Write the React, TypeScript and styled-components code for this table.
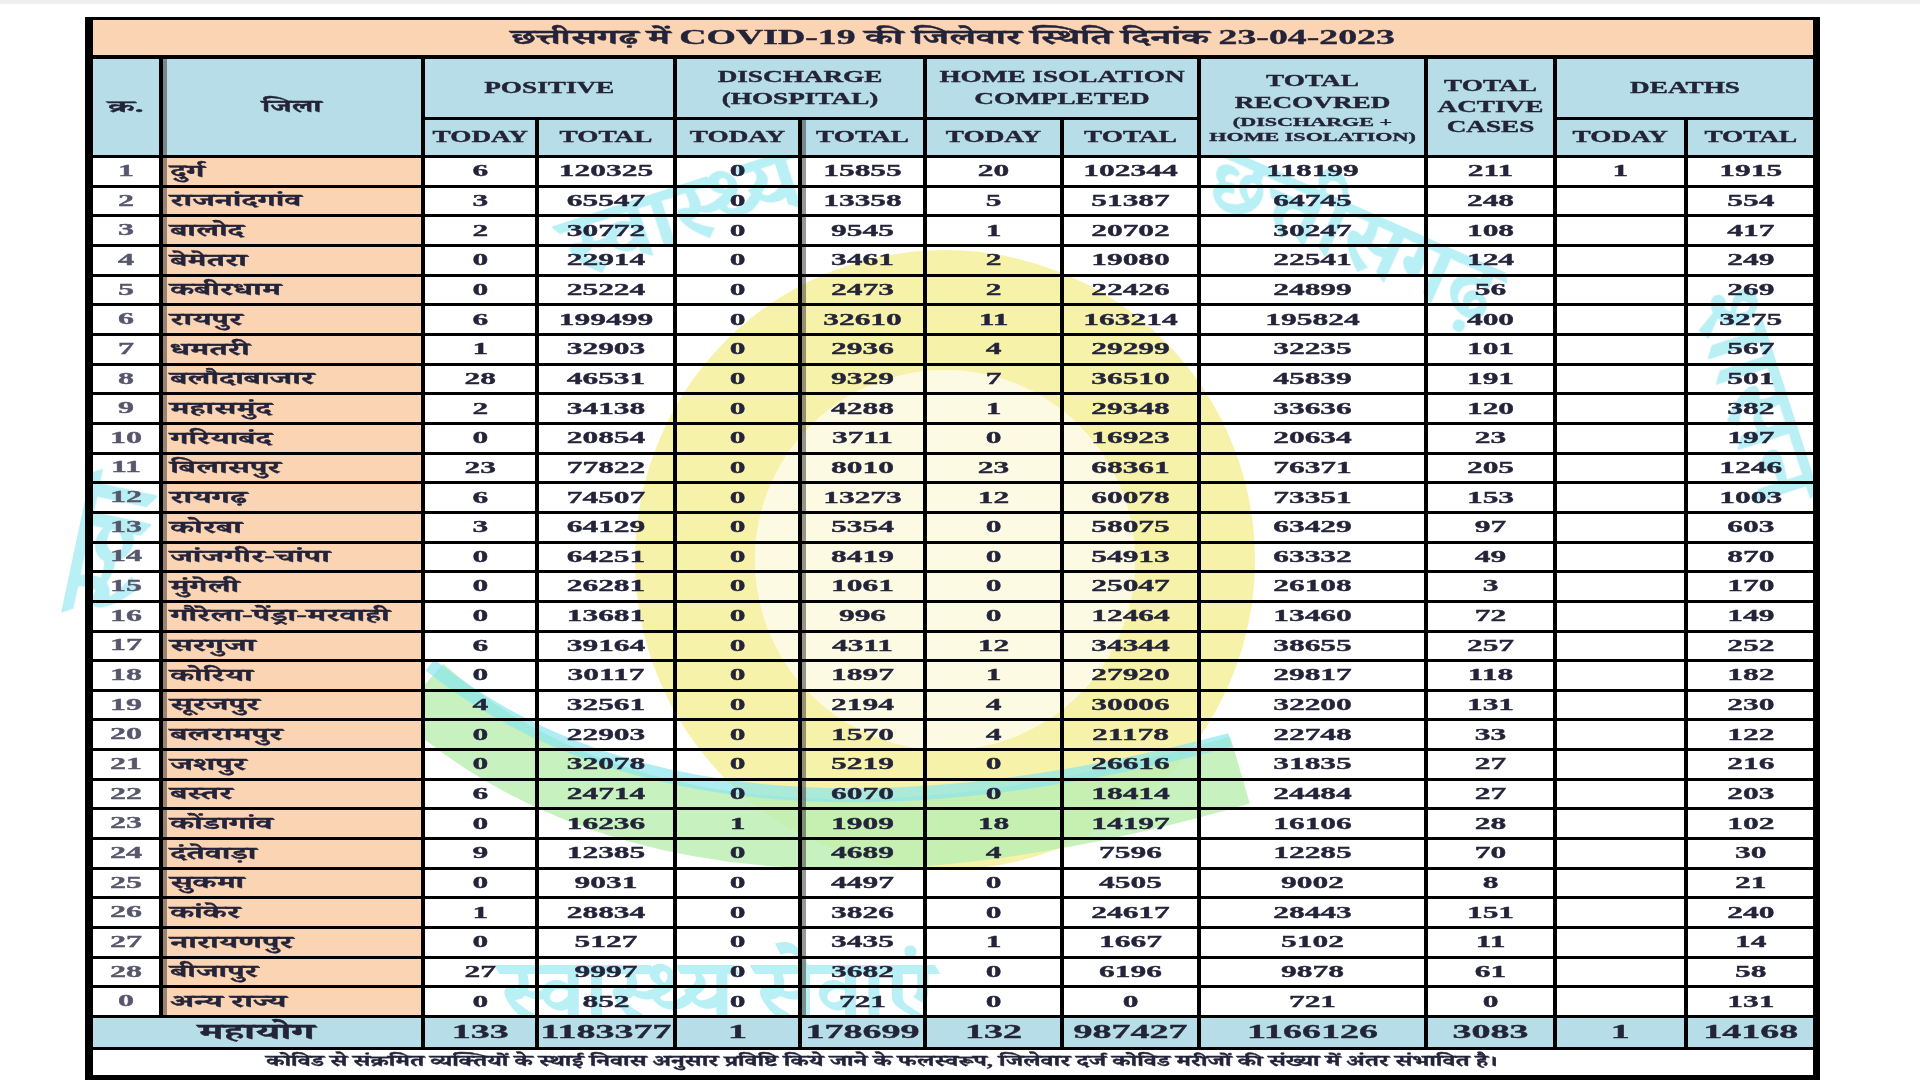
import React from "react";
import styled, { createGlobalStyle } from "styled-components";

const GlobalStyle = createGlobalStyle`
  body {
    margin: 0;
    background: #ffffff;
  }
`;

const SERIF = `"Liberation Serif", "Noto Serif Devanagari", "Noto Sans Devanagari", "Lohit Devanagari", "FreeSerif", serif`;
const INK = "#23233a";
const PEACH = "#fbd4b4";
const BLUE = "#b7dde8";

type Row = [number, string, number, number, number, number, number, number, number, number, number | null, number];

const rows: Row[] = [
  [1, "दुर्ग", 6, 120325, 0, 15855, 20, 102344, 118199, 211, 1, 1915],
  [2, "राजनांदगांव", 3, 65547, 0, 13358, 5, 51387, 64745, 248, null, 554],
  [3, "बालोद", 2, 30772, 0, 9545, 1, 20702, 30247, 108, null, 417],
  [4, "बेमेतरा", 0, 22914, 0, 3461, 2, 19080, 22541, 124, null, 249],
  [5, "कबीरधाम", 0, 25224, 0, 2473, 2, 22426, 24899, 56, null, 269],
  [6, "रायपुर", 6, 199499, 0, 32610, 11, 163214, 195824, 400, null, 3275],
  [7, "धमतरी", 1, 32903, 0, 2936, 4, 29299, 32235, 101, null, 567],
  [8, "बलौदाबाजार", 28, 46531, 0, 9329, 7, 36510, 45839, 191, null, 501],
  [9, "महासमुंद", 2, 34138, 0, 4288, 1, 29348, 33636, 120, null, 382],
  [10, "गरियाबंद", 0, 20854, 0, 3711, 0, 16923, 20634, 23, null, 197],
  [11, "बिलासपुर", 23, 77822, 0, 8010, 23, 68361, 76371, 205, null, 1246],
  [12, "रायगढ़", 6, 74507, 0, 13273, 12, 60078, 73351, 153, null, 1003],
  [13, "कोरबा", 3, 64129, 0, 5354, 0, 58075, 63429, 97, null, 603],
  [14, "जांजगीर-चांपा", 0, 64251, 0, 8419, 0, 54913, 63332, 49, null, 870],
  [15, "मुंगेली", 0, 26281, 0, 1061, 0, 25047, 26108, 3, null, 170],
  [16, "गौरेला-पेंड्रा-मरवाही", 0, 13681, 0, 996, 0, 12464, 13460, 72, null, 149],
  [17, "सरगुजा", 6, 39164, 0, 4311, 12, 34344, 38655, 257, null, 252],
  [18, "कोरिया", 0, 30117, 0, 1897, 1, 27920, 29817, 118, null, 182],
  [19, "सूरजपुर", 4, 32561, 0, 2194, 4, 30006, 32200, 131, null, 230],
  [20, "बलरामपुर", 0, 22903, 0, 1570, 4, 21178, 22748, 33, null, 122],
  [21, "जशपुर", 0, 32078, 0, 5219, 0, 26616, 31835, 27, null, 216],
  [22, "बस्तर", 6, 24714, 0, 6070, 0, 18414, 24484, 27, null, 203],
  [23, "कोंडागांव", 0, 16236, 1, 1909, 18, 14197, 16106, 28, null, 102],
  [24, "दंतेवाड़ा", 9, 12385, 0, 4689, 4, 7596, 12285, 70, null, 30],
  [25, "सुकमा", 0, 9031, 0, 4497, 0, 4505, 9002, 8, null, 21],
  [26, "कांकेर", 1, 28834, 0, 3826, 0, 24617, 28443, 151, null, 240],
  [27, "नारायणपुर", 0, 5127, 0, 3435, 1, 1667, 5102, 11, null, 14],
  [28, "बीजापुर", 27, 9997, 0, 3682, 0, 6196, 9878, 61, null, 58],
  [0, "अन्य राज्य", 0, 852, 0, 721, 0, 0, 721, 0, null, 131],
];

const totals = [133, 1183377, 1, 178699, 132, 987427, 1166126, 3083, 1, 14168];

const colWidths = [68, 261.5, 114.5, 138, 125, 125, 137, 137, 227, 129, 130.5, 127.5];
// columns that carry the grey shadow strip on their left edge
const shaded = new Set([1, 5]);

const Page = styled.div`
  position: relative;
  width: 1920px;
  height: 1080px;
  overflow: hidden;
  background: #ffffff;
`;

const TopStrip = styled.div`
  height: 4px;
  background: #efefef;
  margin-bottom: 13px;
`;

const Watermark = styled.svg`
  position: absolute;
  top: 0;
  left: 0;
  z-index: 0;
`;

const Frame = styled.div`
  position: relative;
  z-index: 1;
  margin-left: 85px;
  width: 1720px;
  border-style: solid;
  border-color: #000;
  border-width: 3px 7px 7px 8px;
`;

const Table = styled.table`
  width: 1720px;
  table-layout: fixed;
  border-collapse: collapse;
  border-style: hidden;
  font-family: ${SERIF};
  font-weight: bold;
  color: ${INK};
`;

const Tr = styled.tr<{ $h: number }>`
  height: ${({ $h }) => $h}px;
`;

const Cell = styled.td<{ $bg?: string; $shade?: boolean; $left?: boolean }>`
  padding: 0;
  border-style: solid;
  border-color: #000;
  border-width: 3px 4px;
  background: ${({ $bg }) => $bg || "transparent"};
  text-align: ${({ $left }) => ($left ? "left" : "center")};
  vertical-align: middle;
  white-space: nowrap;
  overflow: hidden;
  box-shadow: ${({ $shade }) => ($shade ? "inset 4px 0 0 rgba(70, 66, 62, 0.55)" : "none")};
`;

const TitleCell = styled(Cell)`
  border-bottom-width: 4px;
`;

const Text = styled.span<{ $size: number; $sx: number; $left?: boolean; $color?: string }>`
  display: block;
  font-size: ${({ $size }) => $size}px;
  line-height: 1.3;
  color: ${({ $color }) => $color || INK};
  -webkit-text-stroke: 0.35px ${({ $color }) => $color || INK};
  transform: scaleX(${({ $sx }) => $sx});
  transform-origin: ${({ $left }) => ($left ? "left center" : "center")};
  padding-left: ${({ $left }) => ($left ? "4px" : "0")};
`;

const HeadText = styled(Text)`
  line-height: 22px;
`;

const SmallHeadText = styled(Text)`
  line-height: 15px;
`;

const FooterText = styled(Text)`
  padding-left: 105px;
`;

const fmt = (v: number | null) => (v === null ? "" : String(v));

function WatermarkArt() {
  const cyan = "#8ae6ee";
  return (
    <Watermark width="1920" height="1080" viewBox="0 0 1920 1080">
      <circle cx="945" cy="560" r="250" fill="none" stroke="#f6f09a" strokeWidth="120" opacity="0.85" />
      <circle cx="945" cy="560" r="190" fill="#fbf8d6" opacity="0.7" />
      <path d="M420 690 Q 690 930 1240 770" fill="none" stroke="#bdeeb4" strokeWidth="70" opacity="0.85" />
      <path d="M430 665 Q 700 880 1230 740" fill="none" stroke={cyan} strokeWidth="14" opacity="0.7" />
      <g fill={cyan} fontFamily={SERIF} fontWeight="bold" opacity="0.6">
        <text x="575" y="280" fontSize="92" transform="rotate(-18 575 280)">स्वास्थ्य</text>
        <text x="1200" y="200" fontSize="92" transform="rotate(24 1200 200)">छत्तीसगढ़</text>
        <text x="1690" y="300" fontSize="100" transform="rotate(72 1690 300)">शासन</text>
        <text x="130" y="620" fontSize="110" transform="rotate(-78 130 620)">स्वा</text>
        <text x="500" y="1020" fontSize="88">स्वास्थ्य सेवाएं</text>
      </g>
    </Watermark>
  );
}

export default function App() {
  return (
    <Page>
      <GlobalStyle />
      <WatermarkArt />
      <TopStrip />
      <Frame>
        <Table>
          <colgroup>
            {colWidths.map((w, i) => (
              <col key={i} style={{ width: w }} />
            ))}
          </colgroup>
          <tbody>
            <Tr $h={37}>
              <TitleCell colSpan={12} $bg={PEACH}>
                <Text $size={21} $sx={1.8}>
                  छत्तीसगढ़ में COVID-19 की जिलेवार स्थिति दिनांक 23-04-2023
                </Text>
              </TitleCell>
            </Tr>
            <Tr $h={61.5}>
              <Cell as="th" rowSpan={2} $bg={BLUE}>
                <Text $size={17} $sx={2.1}>क्र.</Text>
              </Cell>
              <Cell as="th" rowSpan={2} $bg={BLUE} $shade>
                <Text $size={18} $sx={1.7}>जिला</Text>
              </Cell>
              <Cell as="th" colSpan={2} $bg={BLUE}>
                <HeadText $size={16} $sx={1.7}>POSITIVE</HeadText>
              </Cell>
              <Cell as="th" colSpan={2} $bg={BLUE}>
                <HeadText $size={16} $sx={1.7}>DISCHARGE</HeadText>
                <HeadText $size={16} $sx={1.7}>(HOSPITAL)</HeadText>
              </Cell>
              <Cell as="th" colSpan={2} $bg={BLUE}>
                <HeadText $size={16} $sx={1.7}>HOME ISOLATION</HeadText>
                <HeadText $size={16} $sx={1.7}>COMPLETED</HeadText>
              </Cell>
              <Cell as="th" rowSpan={2} $bg={BLUE}>
                <HeadText $size={16} $sx={1.7}>TOTAL</HeadText>
                <HeadText $size={16} $sx={1.7}>RECOVRED</HeadText>
                <SmallHeadText $size={13} $sx={1.7}>(DISCHARGE +</SmallHeadText>
                <SmallHeadText $size={13} $sx={1.7}>HOME ISOLATION)</SmallHeadText>
              </Cell>
              <Cell as="th" rowSpan={2} $bg={BLUE}>
                <Text $size={16} $sx={1.7}>TOTAL</Text>
                <Text $size={16} $sx={1.7}>ACTIVE</Text>
                <Text $size={16} $sx={1.7}>CASES</Text>
              </Cell>
              <Cell as="th" colSpan={2} $bg={BLUE}>
                <HeadText $size={16} $sx={1.7}>DEATHS</HeadText>
              </Cell>
            </Tr>
            <Tr $h={38}>
              {["TODAY", "TOTAL", "TODAY", "TOTAL", "TODAY", "TOTAL"].map((t, i) => (
                <Cell as="th" key={i} $bg={BLUE} $shade={i === 3}>
                  <Text $size={16} $sx={1.7}>{t}</Text>
                </Cell>
              ))}
              <Cell as="th" $bg={BLUE}>
                <Text $size={16} $sx={1.7}>TODAY</Text>
              </Cell>
              <Cell as="th" $bg={BLUE}>
                <Text $size={16} $sx={1.7}>TOTAL</Text>
              </Cell>
            </Tr>
            {rows.map((r) => {
              const [no, name, ...vals] = r;
              return (
                <Tr $h={29.67} key={name}>
                  <Cell>
                    <Text $size={16} $sx={2} $color="#56566c">{no}</Text>
                  </Cell>
                  <Cell $bg={PEACH} $shade $left>
                    <Text $size={18} $sx={1.8} $left>{name}</Text>
                  </Cell>
                  {vals.map((v, i) => (
                    <Cell key={i} $shade={shaded.has(i + 2)}>
                      <Text $size={17} $sx={1.85}>{fmt(v)}</Text>
                    </Cell>
                  ))}
                </Tr>
              );
            })}
            <Tr $h={29.6}>
              <Cell colSpan={2} $bg={BLUE}>
                <Text $size={22} $sx={1.9}>महायोग</Text>
              </Cell>
              {totals.map((v, i) => (
                <Cell key={i} $bg={BLUE}>
                  <Text $size={19} $sx={2}>{v}</Text>
                </Cell>
              ))}
            </Tr>
            <Tr $h={26.5}>
              <Cell colSpan={12} $left>
                <FooterText $size={15} $sx={1.65} $left>
                  कोविड से संक्रमित व्यक्तियों के स्थाई निवास अनुसार प्रविष्टि किये जाने के फलस्वरूप, जिलेवार दर्ज कोविड मरीजों की संख्या में अंतर संभावित है।
                </FooterText>
              </Cell>
            </Tr>
          </tbody>
        </Table>
      </Frame>
    </Page>
  );
}
